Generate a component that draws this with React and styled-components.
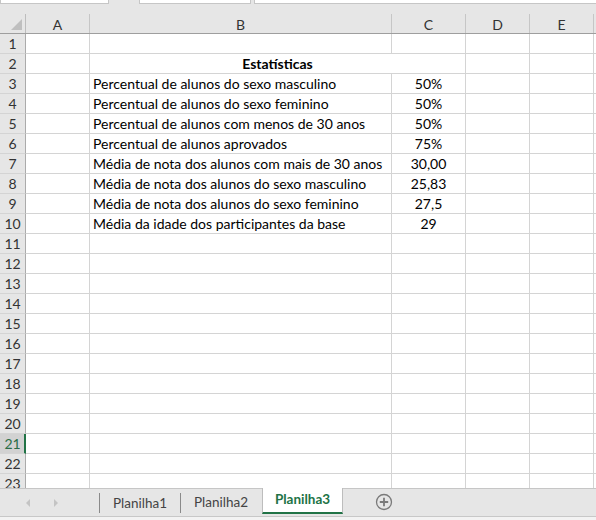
import React from 'react';
import styled, { createGlobalStyle } from 'styled-components';

const Global = createGlobalStyle`
	html, body {
		margin: 0;
		padding: 0;
		background: #e6e6e6;
	}
	body {
		font-family: Lato, "Open Sans", sans-serif;
		font-size: 14px;
		color: #000;
	}
`;

// widths of the visible columns (row header, A..E), border included
const COLS = [26, 64, 302, 74, 64, 64];
const LETTERS = ['A', 'B', 'C', 'D', 'E'];

const rows = {
	3: ['Percentual de alunos do sexo masculino', '50%'],
	4: ['Percentual de alunos do sexo feminino', '50%'],
	5: ['Percentual de alunos com menos de 30 anos', '50%'],
	6: ['Percentual de alunos aprovados', '75%'],
	7: ['Média de nota dos alunos com mais de 30 anos', '30,00'],
	8: ['Média de nota dos alunos do sexo masculino', '25,83'],
	9: ['Média de nota dos alunos do sexo feminino', '27,5'],
	10: ['Média da idade dos participantes da base', '29'],
};

const Sheet = styled.div`
	width: 596px;
	height: 520px;
	display: flex;
	flex-direction: column;
	overflow: hidden;
	background: #e6e6e6;
`;

const TopStrip = styled.div`
	height: 14px;
	display: flex;
	align-items: flex-start;
	flex-shrink: 0;
`;

const TopBox = styled.div`
	height: 3px;
	width: ${(p) => p.w}px;
	margin-left: ${(p) => p.ml || 0}px;
	background: #fff;
	border: 1px solid #c6c6c6;
	border-top: none;
	${(p) => p.grow && 'flex: 1; border-right: none;'}
`;

const HeaderRow = styled.div`
	display: flex;
	height: 20px;
	flex-shrink: 0;
	border-bottom: 1px solid #9e9e9e;
	box-sizing: border-box;
`;

const Corner = styled.div`
	width: 26px;
	position: relative;
	border-right: 1px solid #bdbdbd;
	box-sizing: border-box;
	&::after {
		content: '';
		position: absolute;
		right: 3px;
		bottom: 3px;
		border-style: solid;
		border-width: 0 0 11px 11px;
		border-color: transparent transparent #bfbfbf transparent;
	}
`;

const ColHead = styled.div`
	width: ${(p) => p.w}px;
	box-sizing: border-box;
	border-right: 1px solid #c6c6c6;
	display: flex;
	align-items: center;
	justify-content: center;
	color: #333;
	font-size: 14px;
	padding-top: 1px;
`;

const Grid = styled.div`
	flex: 1;
	overflow: hidden;
	background: #fff;
`;

const Row = styled.div`
	display: flex;
	height: 20px;
`;

const RowHead = styled.div`
	width: 26px;
	flex-shrink: 0;
	box-sizing: border-box;
	border-bottom: 1px solid #d4d4d4;
	border-right: ${(p) => (p.active ? '2px solid #217346' : '1px solid #ababab')};
	background: ${(p) => (p.active ? '#d2d2d2' : '#e6e6e6')};
	color: ${(p) => (p.active ? '#2b6d47' : '#333')};
	font-size: 14px;
	display: flex;
	align-items: center;
	justify-content: center;
	padding-left: ${(p) => (p.active ? '1px' : '0')};
`;

const Cell = styled.div`
	width: ${(p) => p.w}px;
	flex-shrink: 0;
	box-sizing: border-box;
	border-right: 1px solid #d4d4d4;
	border-bottom: 1px solid #d4d4d4;
	padding: 0 3px;
	display: flex;
	align-items: center;
	justify-content: ${(p) => (p.center ? 'center' : 'flex-start')};
	font-weight: ${(p) => (p.bold ? 700 : 400)};
	white-space: nowrap;
	overflow: hidden;
`;

const Filler = styled.div`
	flex: 1;
	border-bottom: 1px solid #d4d4d4;
`;

const TabBar = styled.div`
	height: 28px;
	flex-shrink: 0;
	display: flex;
	align-items: stretch;
	border-top: 1px solid #c6c6c6;
	box-sizing: border-box;
	background: #e6e6e6;
`;

const Nav = styled.div`
	width: 100px;
	display: flex;
	align-items: center;
	padding-left: 26px;
	gap: 24px;
	box-sizing: border-box;
	position: relative;
	&::after {
		content: '';
		position: absolute;
		right: 0;
		top: 4px;
		bottom: 3px;
		width: 1px;
		background: #8a8a8a;
	}
`;

const Arrow = styled.span`
	width: 0;
	height: 0;
	border-top: 4px solid transparent;
	border-bottom: 4px solid transparent;
	${(p) => (p.left ? 'border-right: 4px solid #c4c4c4;' : 'border-left: 4px solid #c4c4c4;')}
`;

const Tab = styled.div`
	width: ${(p) => p.w}px;
	box-sizing: border-box;
	display: flex;
	align-items: center;
	justify-content: center;
	font-size: 13.5px;
	margin-top: ${(p) => (p.active ? '-1px' : '0')};
	padding-bottom: 2px;
	color: ${(p) => (p.active ? '#217346' : '#444')};
	font-weight: ${(p) => (p.active ? 700 : 400)};
	background: ${(p) => (p.active ? '#fff' : 'transparent')};
	border-left: ${(p) => (p.active ? '1px solid #bdbdbd' : 'none')};
	border-right: 1px solid ${(p) => (p.active ? '#bdbdbd' : p.sep ? '#8a8a8a' : 'transparent')};
	border-bottom: ${(p) => (p.active ? '2px solid #217346' : 'none')};
	height: ${(p) => (p.active ? '26px' : 'auto')};
	${(p) => p.sep && 'margin: 4px 0 3px; padding-bottom: 0;'}
`;

const AddButton = styled.div`
	width: 82px;
	display: flex;
	align-items: center;
	justify-content: center;
	padding-bottom: 2px;
`;

const Footer = styled.div`
	height: 3px;
	flex-shrink: 0;
	border-top: 1px solid #c8c8c8;
	background: #f3f3f3;
`;

function PlusIcon() {
	return (
		<svg width="18" height="18" viewBox="0 0 18 18">
			<circle cx="9" cy="9" r="7.5" fill="none" stroke="#7a7a7a" strokeWidth="1.3" />
			<path d="M9 4.8v8.4M4.8 9h8.4" stroke="#7a7a7a" strokeWidth="1.8" />
		</svg>
	);
}

export default function App() {
	const rowNums = Array.from({ length: 23 }, (_, i) => i + 1);

	return (
		<>
			<Global />
			<Sheet>
				<TopStrip>
					<TopBox w={107} />
					<TopBox w={110} ml={30} />
					<TopBox ml={3} grow />
				</TopStrip>

				<HeaderRow>
					<Corner />
					{LETTERS.map((l, i) => (
						<ColHead key={l} w={COLS[i + 1]}>
							{l}
						</ColHead>
					))}
				</HeaderRow>

				<Grid>
					{rowNums.map((n) => {
						const data = rows[n];
						return (
							<Row key={n}>
								<RowHead active={n === 21}>{n}</RowHead>
								<Cell w={COLS[1]} />
								{n === 2 ? (
									<Cell w={COLS[2] + COLS[3]} center bold>
										Estatísticas
									</Cell>
								) : (
									<>
										<Cell w={COLS[2]}>{data && data[0]}</Cell>
										<Cell w={COLS[3]} center>
											{data && data[1]}
										</Cell>
									</>
								)}
								<Cell w={COLS[4]} />
								<Cell w={COLS[5]} />
								<Filler />
							</Row>
						);
					})}
				</Grid>

				<TabBar>
					<Nav>
						<Arrow left />
						<Arrow />
					</Nav>
					<Tab w={81} sep>
						Planilha1
					</Tab>
					<Tab w={81}>Planilha2</Tab>
					<Tab w={81} active>
						Planilha3
					</Tab>
					<AddButton>
						<PlusIcon />
					</AddButton>
				</TabBar>
				<Footer />
			</Sheet>
		</>
	);
}
